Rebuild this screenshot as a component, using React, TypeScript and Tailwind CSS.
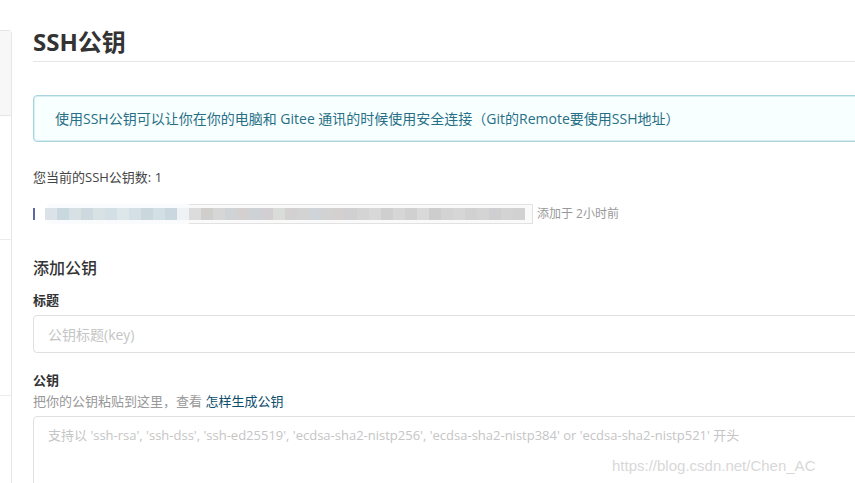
const blueBlocks = [
  "#dbe3e8", "#c9d8de", "#d6e0e5", "#cdd9df", "#d8e2e4", "#d3dfe4",
  "#dde6e9", "#d4e0e5", "#cad8de", "#d2dfe4", "#c9d8df",
];

const grayBlocks = [
  "#dcdcdc", "#d0cdcd", "#d6d6d6", "#cfd3d6", "#d4d0d0", "#cdd2d6", "#d1cfd1",
  "#dadcda", "#d2d0d0", "#d3d3d3", "#cfd4d8", "#d2d2d2", "#d3d0cf", "#d0d0d2",
  "#d4d4d4", "#d8d8d8", "#cfcfcf", "#d6d6d6", "#d0d0d0", "#d9d9d9", "#cdcdcd",
  "#d3d3d3", "#d6d6d6", "#d1d1d1", "#d4d4d4", "#cfcfd2", "#d3d3d3", "#d1d1d1",
];

const App = () => {
  return (
    <main
      className="relative w-[855px] h-[483px] overflow-hidden bg-white text-[#333]"
      style={{ fontFamily: '"Open Sans", "Noto Sans CJK SC", sans-serif' }}
    >
      <div className="flex">
        {/* side menu, mostly cut off */}
        <aside className="mt-[30px] w-[12px] shrink-0 h-[460px] border-r border-t border-[#e6e6e6] rounded-tr-[4px] flex flex-col">
          <div className="h-[85px] bg-[#f7f7f7] border-b border-[#e6e6e6]" />
          <div className="h-[124px] border-b border-[#ececec]" />
          <div className="h-[156px] border-b border-[#ececec]" />
        </aside>

        <section className="ml-[21px] w-[900px] shrink-0 pt-[26px]">
          <h1 className="text-[24px] font-bold leading-[32px] pb-[3px] border-b border-[#e5e5e5] text-[#333]">
            SSH公钥
          </h1>

          <div className="mt-[33px] h-[47px] border border-[#a9d5de] rounded-[4px] bg-[#f8ffff] shadow-[0_0_0_1px_rgba(169,213,222,0.4)_inset] flex items-center pl-[21px] text-[14px] text-[#276f86]">
            使用SSH公钥可以让你在你的电脑和 Gitee 通讯的时候使用安全连接（Git的Remote要使用SSH地址）
          </div>

          <p className="mt-[26px] text-[13px] leading-[18px] text-[#444]">
            您当前的SSH公钥数: 1
          </p>

          <div className="mt-[18px] flex items-center h-[20px]">
            <div className="w-[2px] h-[12px] bg-[#5a6aa6] mr-[10px]" />
            <div className="flex items-center h-[20px] bg-[#f9fbfc] rounded-l-[8px]">
              {blueBlocks.map((c, i) => (
                <div key={i} className="w-[12px] h-[12px]" style={{ background: c }} />
              ))}
              <div className="w-[12px] h-[12px] bg-[#eef2f4]" />
            </div>
            <div className="flex items-center h-[20px] border border-[#e2e2e2] border-l-0 bg-[#fafafa] pr-[7px]">
              {grayBlocks.map((c, i) => (
                <div key={i} className="w-[12px] h-[12px]" style={{ background: c }} />
              ))}
            </div>
            <span className="ml-[4px] text-[12px] text-[#999]">添加于 2小时前</span>
          </div>

          <h2 className="mt-[32px] text-[16px] leading-[24px] font-medium text-[#333]">添加公钥</h2>

          <label className="block mt-[11px] text-[13px] leading-[18px] font-bold text-[#333]">标题</label>
          <div className="mt-[6px] h-[38px] border border-[#e0e0e0] rounded-[4px] flex items-center pl-[14px] text-[14px] text-[#c5c5c5]">
            公钥标题(key)
          </div>

          <label className="block mt-[18px] text-[13px] leading-[18px] font-bold text-[#333]">公钥</label>
          <p className="mt-[3px] text-[13px] leading-[18px] text-[#999]">
            把你的公钥粘贴到这里，查看 <span className="text-[#0c4d6e]">怎样生成公钥</span>
          </p>
          <div className="mt-[6px] h-[80px] border border-[#e0e0e0] rounded-[4px] pl-[14px] pt-[9px] text-[13px] text-[#c5c5c5]">
            支持以 'ssh-rsa', 'ssh-dss', 'ssh-ed25519', 'ecdsa-sha2-nistp256', 'ecdsa-sha2-nistp384' or 'ecdsa-sha2-nistp521' 开头
          </div>
        </section>
      </div>

      <span
        className="absolute left-[612px] top-[455px] text-[15px] text-[#d8d8d8]"
        style={{ fontFamily: '"Liberation Sans", Arial, sans-serif' }}
      >
        https://blog.csdn.net/Chen_AC
      </span>
    </main>
  );
};

export default App;
